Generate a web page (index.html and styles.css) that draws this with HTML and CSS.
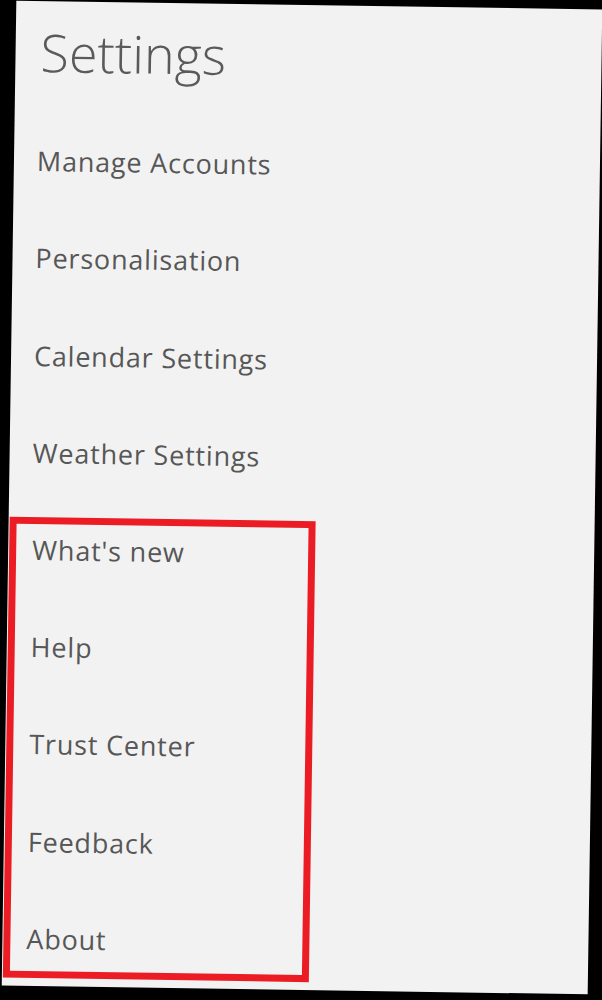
FILE: index.html
```html
<!DOCTYPE html>
<html lang="en">
<head>
<meta charset="UTF-8">
<meta name="viewport" content="width=device-width, initial-scale=1.0">
<title>Settings</title>
<link rel="stylesheet" href="styles.css">
</head>
<body>
<div class="panel">
  <h1 class="title">Settings</h1>

  <ul class="menu">
    <li>Manage Accounts</li>
    <li>Personalisation</li>
    <li>Calendar Settings</li>
    <li>Weather Settings</li>
  </ul>

  <ul class="menu highlight">
    <li>What's new</li>
    <li>Help</li>
    <li>Trust Center</li>
    <li>Feedback</li>
    <li>About</li>
  </ul>
</div>
</body>
</html>
```

FILE: styles.css
```css
html, body {
  margin: 0;
  padding: 0;
  height: 100%;
}

body {
  background: #000;
  overflow: hidden;
  font-family: "Open Sans", "Segoe UI", Arial, sans-serif;
}

/* the captured flyout sits a little crooked in the screenshot */
.panel {
  width: 586px;
  height: 985px;
  margin: 5px 0 0 9px;
  padding-top: 19px;
  box-sizing: border-box;
  background: #f2f2f2;
  transform: rotate(0.85deg);
}

.title {
  margin: 0;
  padding-left: 25px;
  font-size: 52px;
  font-weight: 300;
  line-height: 64px;
  color: #5a5a5a;
}

.menu {
  list-style: none;
  margin: 59px 0 0;
  padding: 0 0 0 23px;
}

.menu li {
  height: 36px;
  font-size: 27px;
  line-height: 36px;
  letter-spacing: 0.8px;
  color: #575757;
  margin-bottom: 61.3px;
}

.menu li:last-child {
  margin-bottom: 0;
}

.highlight {
  width: 306px;
  box-sizing: border-box;
  margin: 46px 0 0 1px;
  padding: 8px 0 14px 16px;
  border: 7px solid #ec1c24;
}
```
